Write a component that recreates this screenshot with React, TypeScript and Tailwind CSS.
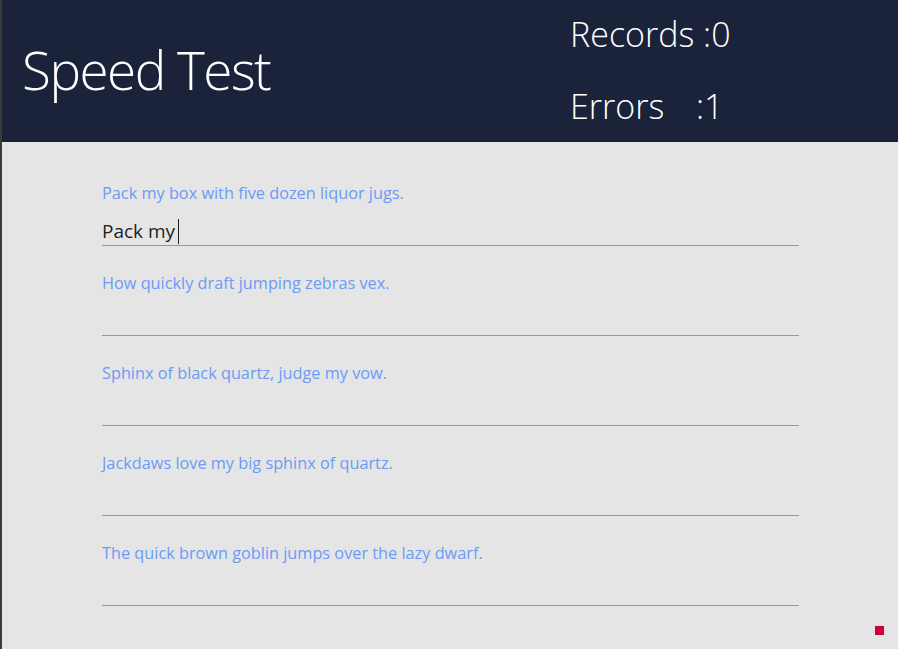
import React from 'react';

const sentences = [
  'Pack my box with five dozen liquor jugs.',
  'How quickly draft jumping zebras vex.',
  'Sphinx of black quartz, judge my vow.',
  'Jackdaws love my big sphinx of quartz.',
  'The quick brown goblin jumps over the lazy dwarf.',
];

const App: React.FC = () => {
  return (
    <div
      className="w-[898px] h-[649px] bg-[#e5e5e5] border-l-2 border-l-[#3a3a3a] flex flex-col overflow-hidden"
      style={{ fontFamily: '"Open Sans", "Noto Sans", sans-serif' }}
    >
      <header className="h-[142px] bg-[#1a2339] flex text-white">
        <div className="flex-1 flex items-center pl-[20px] pb-[4px]">
          <h1 className="text-[53px] font-light leading-none tracking-[-1.5px]">Speed Test</h1>
        </div>
        <div className="w-[328px] flex flex-col pt-[15px] gap-[34px] text-[34px] font-light leading-[38px]">
          <p>Records :0</p>
          <p className="flex">
            <span className="w-[126px]">Errors</span>
            <span>:1</span>
          </p>
        </div>
      </header>

      <main className="flex-1 relative pt-[41px] pl-[100px] pr-[99px]">
        {sentences.map((s, i) => (
          <div key={s} className={i === 0 ? '' : 'mt-[27px]'}>
            <p className="text-[16.3px] leading-5 text-[#6b9bf4]">{s}</p>
            <div className="h-[42px] flex items-end">
              {i === 0 && (
                <span className="text-[19px] leading-7 text-[#1e1e1e] flex items-center">
                  Pack my
                  <span className="inline-block w-px h-[25px] bg-[#1e1e1e] ml-[3px]" />
                </span>
              )}
            </div>
            <div className="h-px bg-[#6b9bf4]" />
          </div>
        ))}
        <div className="absolute right-[14px] bottom-[14px] w-[9px] h-[9px] bg-[#d2003a]" />
      </main>
    </div>
  );
};

export default App;
